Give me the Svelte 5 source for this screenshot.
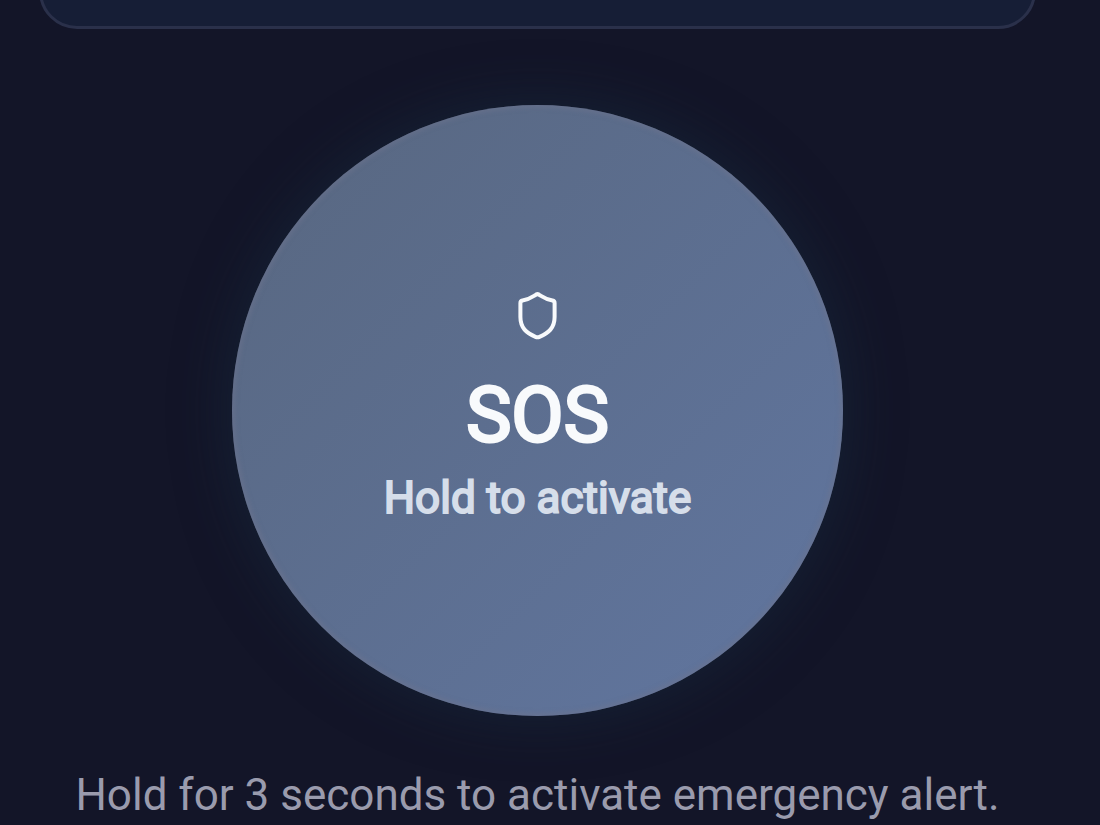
<script lang="ts">
  let holding = $state(false);
</script>

<main>
  <section class="panel" aria-label="Status"></section>
  <button
    class="sos"
    class:holding
    onpointerdown={() => (holding = true)}
    onpointerup={() => (holding = false)}
    onpointerleave={() => (holding = false)}
  >
    <svg viewBox="0 0 40 50" aria-hidden="true">
      <path d="M17 4.400Q19.500 2 22 4.400Q28.500 8.500 34.500 9.500Q36.600 10 36.600 12V26C36.600 37 30.500 42 21.500 45.800Q19.500 46.600 17.500 45.800C8.500 42 2.400 37 2.400 26V12Q2.400 10 4.500 9.500Q10.500 8.500 17 4.400Z" />
    </svg>
    <span class="title">SOS</span>
    <span class="action">Hold to activate</span>
  </button>
  <p>Hold for 3 seconds to activate emergency alert.</p>
</main>

<style>
  :global(body) {
    margin: 0;
    background: #131528;
  }
  main {
    box-sizing: border-box;
    display: flex;
    flex-direction: column;
    align-items: center;
    padding: 0 64px 0 39px;
    overflow: hidden;
    font-family: Roboto, sans-serif;
  }
  .panel {
    box-sizing: border-box;
    width: 100%;
    height: 80px;
    margin-top: -51px;
    border: 3px solid #2a304a;
    border-radius: 38px;
    background: #161e36;
  }
  .sos {
    box-sizing: border-box;
    display: flex;
    flex-direction: column;
    align-items: center;
    width: 611px;
    max-width: 100%;
    aspect-ratio: 1;
    margin-top: 76px;
    padding: 186px 24px 24px;
    border: 0;
    border-radius: 50%;
    color: #f8fafc;
    background: linear-gradient(135deg, #586780, #6176a0);
    box-shadow:
      inset 0 0 4px 3px #6d738e80,
      0 0 56px #18304480;
    font-family: inherit;
    cursor: pointer;
  }
  .sos.holding {
    filter: brightness(1.1);
  }
  svg {
    width: 40px;
    height: 50px;
    fill: none;
    stroke: currentColor;
    stroke-width: 4;
    stroke-linecap: round;
    stroke-linejoin: round;
  }
  .title {
    margin-top: 30px;
    font-size: 76px;
    line-height: 88px;
    -webkit-text-stroke: 3px currentColor;
  }
  .action {
    margin-top: 7px;
    color: #d6deea;
    font-size: 44px;
    line-height: 64px;
    -webkit-text-stroke: 2px currentColor;
  }
  p {
    margin: 49px 0 0;
    color: #9a9bad;
    font-size: 44px;
    line-height: 60px;
    text-align: center;
  }
</style>
